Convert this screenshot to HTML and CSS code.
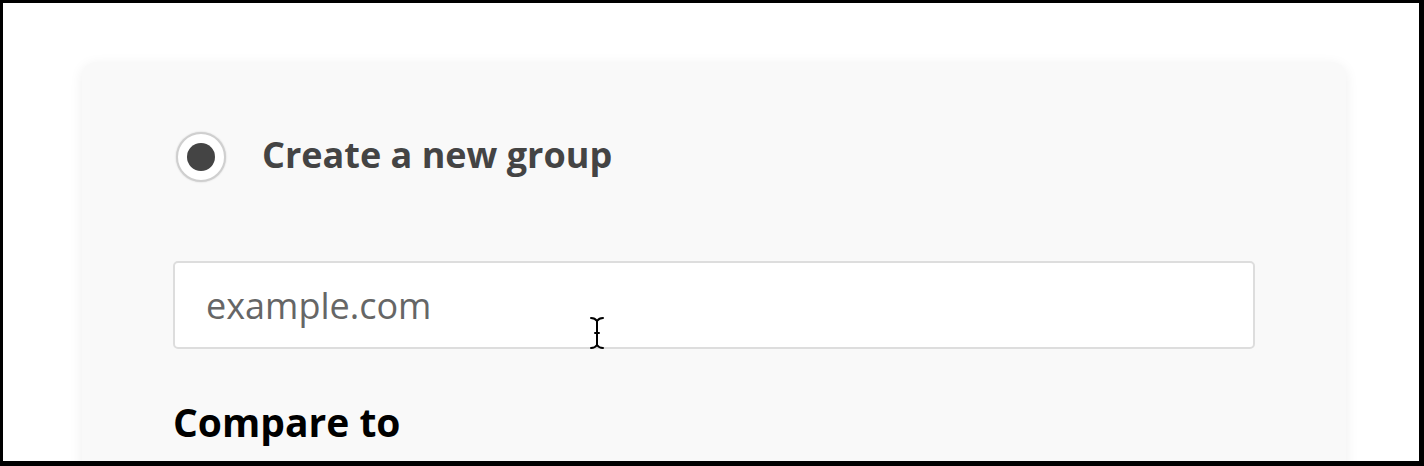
FILE: index.html
```html
<!DOCTYPE html>
<html>
<head>
<meta charset="utf-8">
<link rel="stylesheet" href="styles.css">
</head>
<body>
<div class="frame">
  <div class="card">
    <label class="option">
      <span class="radio"><span class="dot"></span></span>
      <span class="option-label">Create a new group</span>
    </label>
    <div class="field">
      <input class="text-input" type="text" placeholder="example.com">
      <svg class="cursor" width="16" height="34" viewBox="0 0 16 34" aria-hidden="true">
        <path d="M2 2 Q6 2 8 5 Q10 2 14 2 M8 5 V29 M6 17 H10 M2 32 Q6 32 8 29 Q10 32 14 32" fill="none" stroke="#000" stroke-width="2" stroke-linecap="round"/>
      </svg>
    </div>
    <h2 class="section-title">Compare to</h2>
  </div>
</div>
</body>
</html>
```
FILE: styles.css
```css
html, body {
  margin: 0;
  padding: 0;
  background: #000;
}
.frame {
  box-sizing: border-box;
  width: 1424px;
  height: 466px;
  border-style: solid;
  border-color: #000;
  border-width: 3px 5px 5px 3px;
  background: #fff;
  padding: 59px 73px 0 79px;
  overflow: hidden;
}
.card {
  background: #f9f9f9;
  border-radius: 14px;
  box-shadow: 0 3px 14px rgba(0, 0, 0, 0.07);
  padding: 70px 91px 40px 91px;
  height: 500px;
  box-sizing: border-box;
  display: flex;
  flex-direction: column;
  font-family: "Open Sans", sans-serif;
}
.option {
  display: flex;
  align-items: center;
  height: 50px;
  padding-left: 3px;
}
.radio {
  box-sizing: border-box;
  width: 50px;
  height: 50px;
  border-radius: 50%;
  border: 2px solid #cfcfcf;
  background: #fff;
  box-shadow: 0 0 2px rgba(0, 0, 0, 0.18);
  display: flex;
  align-items: center;
  justify-content: center;
  flex-shrink: 0;
}
.dot {
  width: 28px;
  height: 28px;
  border-radius: 50%;
  background: #444;
}
.option-label {
  margin-left: 36px;
  margin-bottom: 4px;
  font-size: 36px;
  font-weight: 700;
  color: #444;
  line-height: 1;
}
.field {
  position: relative;
  margin-top: 79px;
}
.text-input {
  box-sizing: border-box;
  width: 100%;
  height: 88px;
  border: 2px solid #ddd;
  border-radius: 5px;
  background: #fff;
  padding: 0 0 0 31px;
  font-family: "Open Sans", sans-serif;
  font-size: 36px;
  color: #333;
  outline: none;
}
.text-input::placeholder {
  color: #666;
}
.cursor {
  position: absolute;
  left: 416px;
  top: 55px;
}
.section-title {
  margin: 53px 0 0 0;
  font-size: 39px;
  font-weight: 700;
  color: #000;
  line-height: 1;
}
```
